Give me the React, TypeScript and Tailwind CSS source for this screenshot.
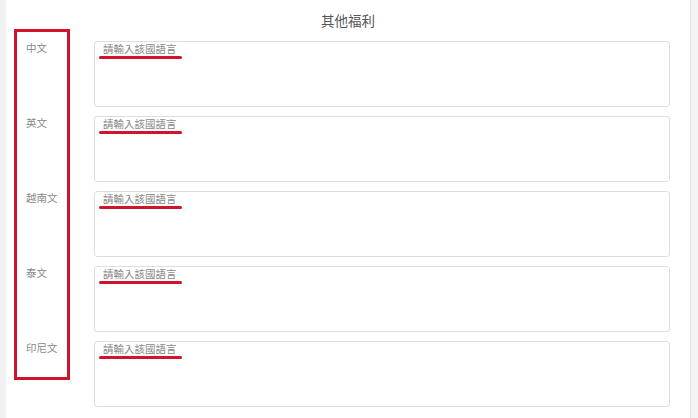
import React from "react";

const rows = ["中文", "英文", "越南文", "泰文", "印尼文"];

export default function App() {
  return (
    <div
      className="relative flex w-[698px] h-[418px] overflow-hidden bg-white"
      style={{ fontFamily: '"Noto Sans CJK TC", "Noto Sans", sans-serif' }}
    >
      <div className="w-[6px] shrink-0 bg-[#f1f1f1]" />
      <div className="flex-1 flex flex-col">
        <div className="h-[41px] pt-[11px] text-center text-[13.5px] leading-[18px] text-[#555]">
          其他福利
        </div>
        <div className="flex flex-col gap-[9px]">
          {rows.map((label) => (
            <div key={label} className="flex">
              <div className="w-[88px] shrink-0 pl-[20px] text-[10.5px] leading-[14px] text-[#888]">
                {label}
              </div>
              <div className="relative w-[576px] h-[66px]">
                <textarea
                  placeholder="請輸入該國語言"
                  className="w-full h-full resize-none rounded-[3px] border border-[#dedede] px-[8px] pt-0 text-[10.5px] leading-[14px] text-[#555] placeholder:text-[#888] outline-none"
                />
                <div className="absolute left-[5px] top-[15px] w-[83px] h-[2.5px] rounded-full bg-[#d0142b]" />
              </div>
            </div>
          ))}
        </div>
      </div>
      <div className="w-[8px] shrink-0 bg-[#f4f4f4] border-l border-[#e4e4e4]" />
      <div className="absolute left-[14px] top-[29px] w-[56px] h-[351px] border-[3px] border-[#d0142b]" />
    </div>
  );
}
